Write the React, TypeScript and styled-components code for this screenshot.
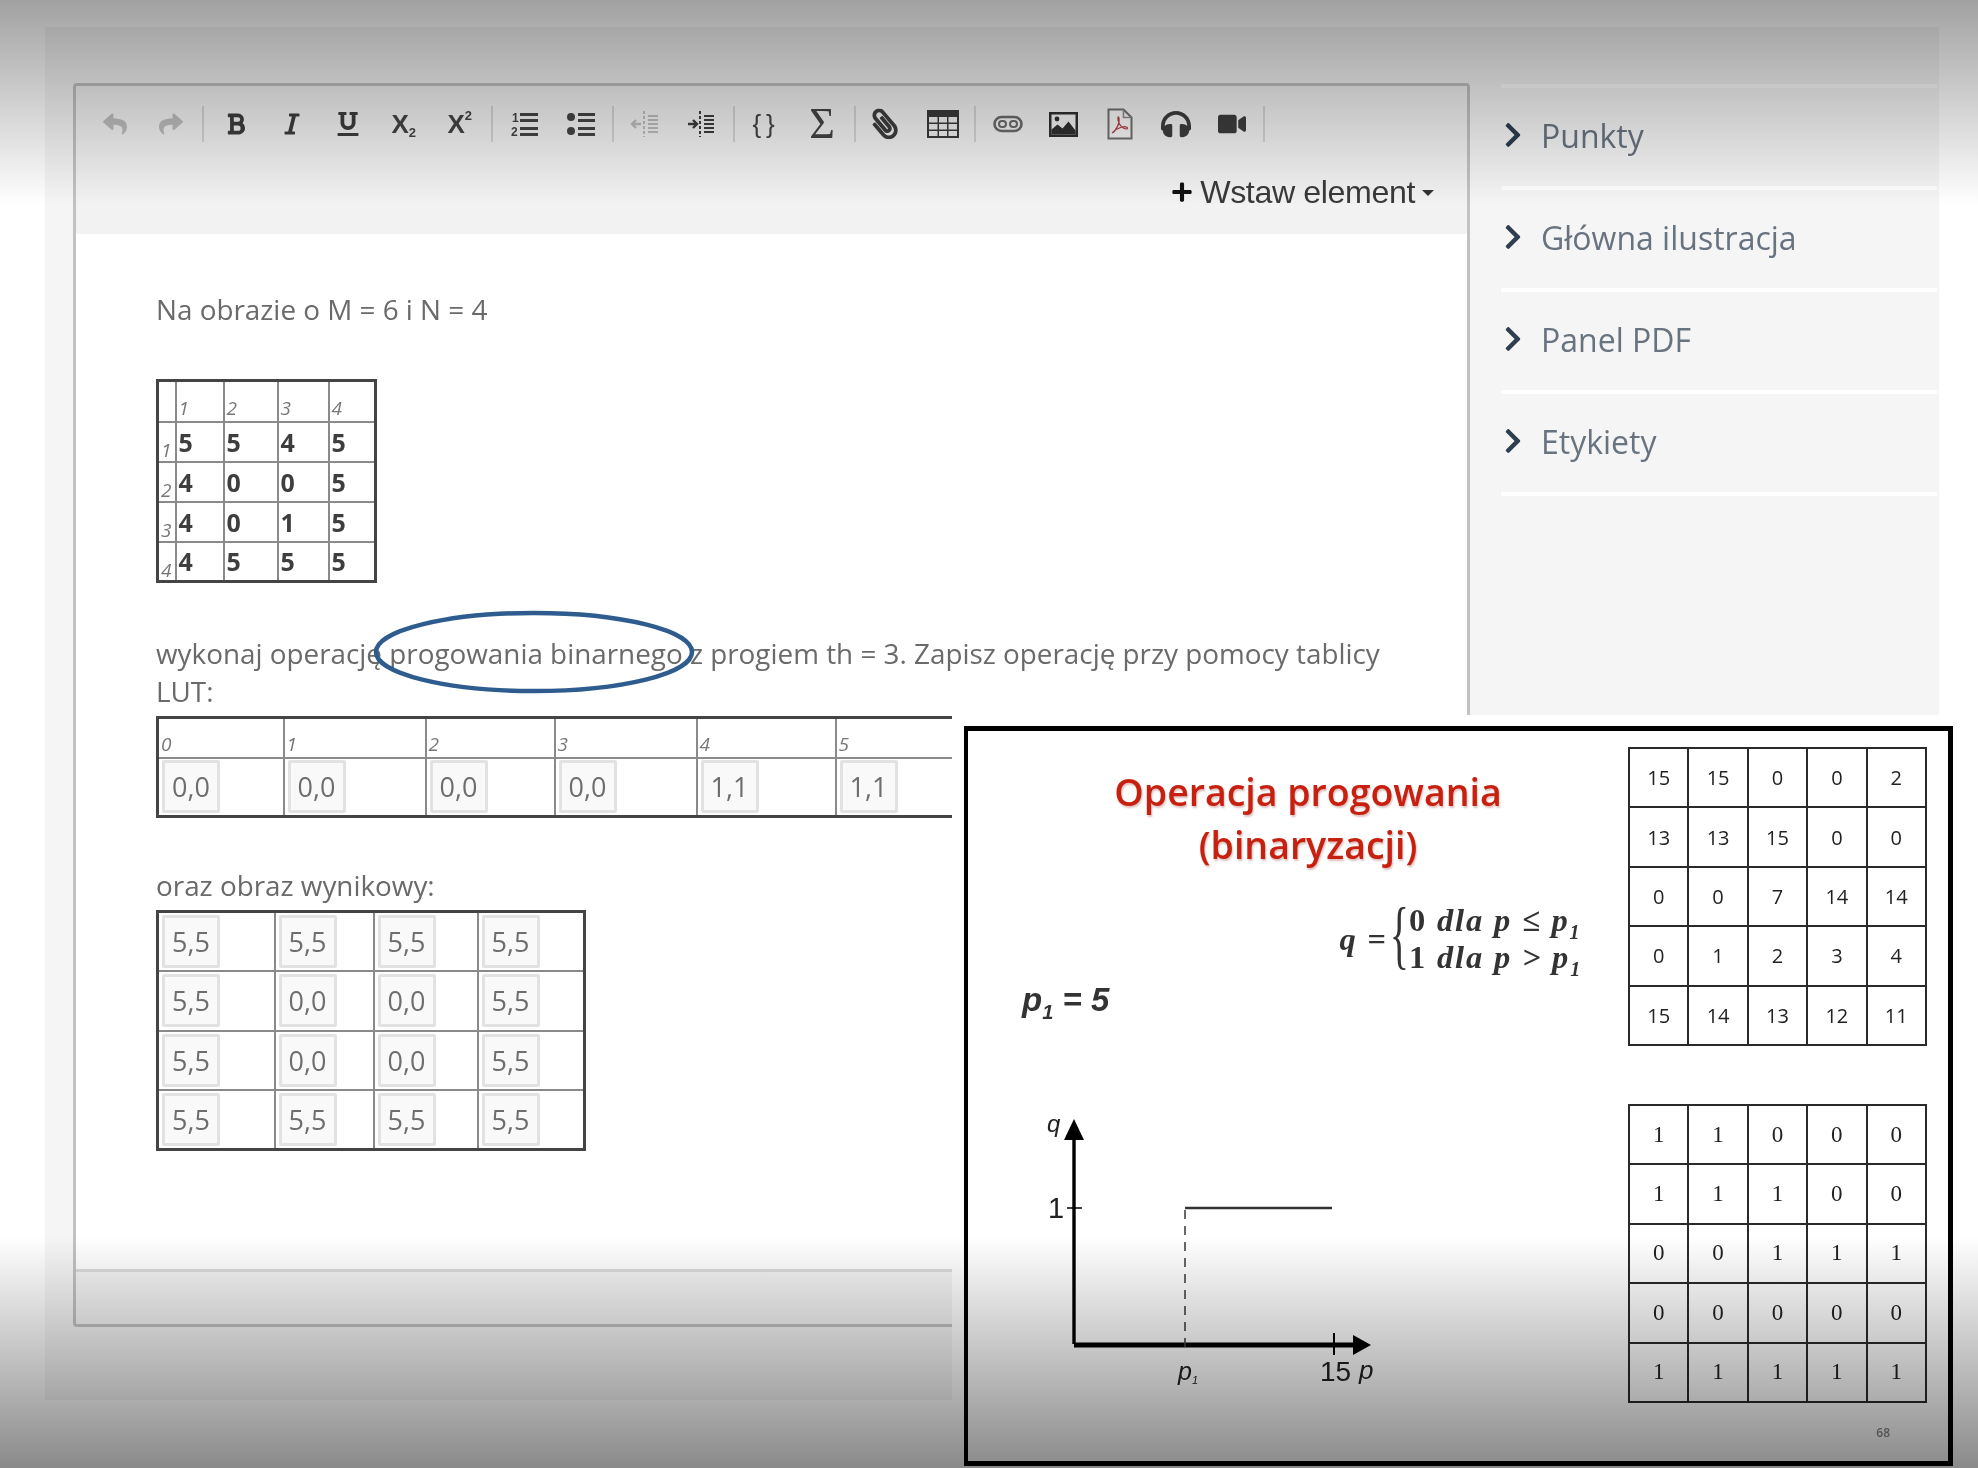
import React from "react";
import styled, { createGlobalStyle } from "styled-components";
import {
  FaReply, FaShare, FaBold, FaItalic, FaUnderline, FaPaperclip, FaHeadphones, FaVideo, FaPlus, FaChevronRight,
} from "react-icons/fa";

const Global = createGlobalStyle`
  html, body { margin: 0; padding: 0; background: #fff; }
  body { font-family: "Open Sans", "Noto Sans", sans-serif; }
`;

const Page = styled.div`
  position: relative; width: 1978px; height: 1468px; overflow: hidden; background: #fff;
  filter: blur(0.45px);
`;
const Panel = styled.div`
  display: flex; box-sizing: border-box; height: 1373px; margin: 0 39px 0 45px;
  position: relative; top: 27px; background: #f5f5f5; padding: 56px 0 0 28px;
`;
const Editor = styled.div`
  display: flex; flex-direction: column; box-sizing: border-box; flex: none; width: 1397px; height: 1244px;
  background: #fff; border: 3px solid #c2c2c2; border-radius: 4px;
`;
const Toolbar = styled.div`
  flex: none; box-sizing: border-box; height: 148px; background: #f2f2f2; padding: 18px 0 0 11px;
`;
const ToolRow = styled.div` display: flex; align-items: center; height: 40px; `;
const ToolBtn = styled.span<{ $muted?: boolean; $size?: number }>`
  display: flex; align-items: center; justify-content: center; flex: none; width: 56px; height: 40px;
  color: ${(p) => (p.$muted ? "#bdbdbd" : "#3d3d3d")};
  font-size: ${(p) => p.$size ?? 24}px;
`;
const MirrorBtn = styled(ToolBtn)` svg { transform: translateX(-2px) scaleX(-1) rotate(-4deg); } `;
const BraceGlyph = styled.span`
  font-family: "Liberation Sans", sans-serif; font-size: 26px; letter-spacing: 5px; color: #444; line-height: 1;
`;
const SumGlyph = styled.span`
  font-family: "Liberation Serif", serif; font-size: 44px; color: #444; line-height: 1;
`;
const ScriptGlyph = styled.span`
  font-family: "Liberation Sans", sans-serif; font-weight: 700; font-size: 26px; color: #444; line-height: 32px;
  display: flex; height: 32px;
`;
const ScriptMark = styled.span<{ $up?: boolean }>`
  font-size: 13px; line-height: 15px; align-self: ${(p) => (p.$up ? "flex-start" : "flex-end")};
`;
const ToolSep = styled.span`
  flex: none; width: 2px; height: 36px; margin: 0 3.4px; background: #d4d4d4;
`;
const InsertRow = styled.div`
  display: flex; align-items: center; justify-content: flex-end; gap: 7px; height: 44px;
  margin-top: 26px; padding-right: 33px;
  font-family: "Liberation Sans", Arial, sans-serif; font-size: 32.2px; letter-spacing: -0.4px; color: #3a3a3a;
  svg { color: #111; font-size: 22px; }
`;
const Caret = styled.span`
  width: 0; height: 0; border-left: 6px solid transparent; border-right: 6px solid transparent;
  border-top: 6px solid #333; margin-top: 2px;
`;
const Content = styled.div`
  flex: 1; box-sizing: border-box; padding: 56px 60px 0 80px; color: #6a6a6a; font-size: 27.85px; line-height: 38px;
`;
const Para = styled.p<{ $top: number }>` position: relative; margin: ${(p) => p.$top}px 0 0; `;
const Ring = styled.svg`
  position: absolute; left: 217px; top: -24px; width: 322px; height: 84px; overflow: visible;
`;
const Grid = styled.table<{ $w: number; $top: number }>`
  border-collapse: collapse; table-layout: fixed; width: ${(p) => p.$w}px; margin-top: ${(p) => p.$top}px;
  border: 3px solid #444;
`;
const Col = styled.col<{ $w: number }>` width: ${(p) => p.$w}px; `;
const Cell = styled.td<{ $h: number }>`
  box-sizing: border-box; height: ${(p) => p.$h}px; border: 2px solid #8a8a8a; padding: 0 0 0 2px;
  vertical-align: middle; line-height: 1;
`;
const Digit = styled.span`
  font-size: 25px; font-weight: 700; color: #3e3e3e;
`;
const Small = styled.i`
  display: block; font-size: 19px; line-height: 1; color: #777; transform: translateY(7px);
`;
const RowHead = styled.i`
  display: block; font-size: 19px; line-height: 1; color: #777; transform: translateY(9px);
`;
const Box = styled.span<{ $shift?: number }>`
  display: flex; align-items: center; justify-content: center; box-sizing: border-box; width: 58px; height: 53px;
  margin-left: ${(p) => p.$shift ?? 0}px; background: #f9f9f9; border: 3px solid #e2e2e2; border-radius: 2px;
  font-size: 27px; color: #6e6e6e;
`;
const Footer = styled.div`
  flex: none; height: 52px; background: #f4f4f4; border-top: 3px solid #dcdcdc;
`;
const Side = styled.div` flex: none; width: 436px; margin-left: 31px; margin-top: 1px; `;
const SideRow = styled.div`
  display: flex; align-items: center; gap: 14px; box-sizing: border-box; height: 102px;
  border-top: 4px solid #fff; padding: 0 0 4px 0; color: #687380; font-size: 32px;
  svg { color: #2c3e50; font-size: 28px; flex: none; margin-left: -2px; }
`;
const SideEnd = styled.div` border-top: 4px solid #fff; `;
const SlideMask = styled.div`
  position: absolute; left: 952px; top: 715px; right: 0; bottom: 0; box-sizing: border-box;
  background: #fff; padding: 11px 25px 2px 12px;
`;
const Slide = styled.div`
  position: relative; display: flex; box-sizing: border-box; height: 100%; background: #fff;
  border: 5px solid #000; border-left-width: 4px; padding: 16px 20px 0 0;
`;
const SlideLeft = styled.div` flex: none; width: 660px; display: flex; flex-direction: column; `;
const SlideTitle = styled.h1`
  margin: 18px 0 0 20px; text-align: center; font-size: 37.5px; line-height: 53px; font-weight: 600; color: #c8200f;
  text-shadow: 1px 2px 2px rgba(120, 0, 0, 0.25);
`;
const Formula = styled.div`
  display: flex; align-items: center; justify-content: flex-end; margin: 31px 46px 0 0;
  font-family: "Liberation Serif", serif; font-weight: 700; font-style: italic; font-size: 32.5px; letter-spacing: 1.8px; color: #333;
  sub { font-size: 20px; line-height: 0; }
`;
const Lhs = styled.span` margin-right: 2px; white-space: pre; `;
const Brace = styled.span`
  font-style: normal; font-weight: 400; font-size: 40px; line-height: 74px; letter-spacing: 0;
  transform: scale(1, 1.9) translateY(-2px);
`;
const FormulaLines = styled.div` display: flex; flex-direction: column; line-height: 37px; white-space: pre; `;
const Upright = styled.span` font-style: normal; font-weight: 700; `;
const Threshold = styled.div`
  margin: 6px 0 0 54px; font-family: "Liberation Sans", sans-serif; font-weight: 700; font-style: italic;
  font-size: 33px; line-height: 36px; color: #333;
  sub { font-size: 20px; line-height: 0; }
`;
const Chart = styled.svg` display: block; margin: 84px 0 0 61px; width: 360px; height: 296px; `;
const SlideRight = styled.div` flex: none; width: 299px; display: flex; flex-direction: column; gap: 58px; `;
const DataTable = styled.table<{ $serif?: boolean }>`
  border-collapse: collapse; table-layout: fixed; width: 299px; height: 299px;
  font-family: ${(p) => (p.$serif ? '"Liberation Serif", serif' : '"Open Sans", sans-serif')};
  font-size: ${(p) => (p.$serif ? 23 : 20)}px; color: #222;
  td { border: 2px solid #2a2a2a; text-align: center; padding: 0; }
`;
const PageNo = styled.span`
  position: absolute; right: 58px; bottom: 20px; font-size: 12px; font-weight: 600; color: #8a8a8a;
`;
const TopShade = styled.div`
  position: absolute; left: 0; right: 0; top: 0; height: 205px; pointer-events: none;
  background: linear-gradient(rgba(0,0,0,0.37), rgba(0,0,0,0));
`;
const BottomShade = styled.div`
  position: absolute; left: 0; right: 0; bottom: 0; height: 232px; pointer-events: none;
  background: linear-gradient(rgba(0,0,0,0), rgba(0,0,0,0.46));
`;

const OutdentIcon = ({ on }: { on?: boolean }) => (
  <svg width="30" height="30" viewBox="0 0 30 30" stroke="currentColor" fill="none" strokeWidth="2">
    <path d="M14 2v26" strokeDasharray="3 2" />
    <path d="M18 7h10M18 11h10M18 15h10M18 19h10M18 23h10" strokeWidth="2.2" />
    {on ? <path d="M2 15h8M7 11l4 4-4 4" strokeWidth="2.4" /> : <path d="M11 15H3M6 11l-4 4 4 4" strokeWidth="2.4" />}
  </svg>
);
const OrderedIcon = () => (
  <svg width="28" height="32" viewBox="0 -3 28 32" fill="#444">
    <text x="1" y="11" fontSize="12" fontWeight="700" fontFamily="Liberation Sans, sans-serif">1</text>
    <text x="0" y="25" fontSize="12" fontWeight="700" fontFamily="Liberation Sans, sans-serif">2</text>
    <path d="M9 2h18v3H9zM9 8h18v3H9zM9 16h18v3H9zM9 22h18v3H9z" />
  </svg>
);
const BulletIcon = () => (
  <svg width="28" height="26" viewBox="0 0 28 26" fill="#444">
    <circle cx="4" cy="6" r="4" />
    <circle cx="4" cy="20" r="4" />
    <path d="M11 2h17v3H11zM11 8h17v3H11zM11 16h17v3H11zM11 22h17v3H11z" />
  </svg>
);
const GridIcon = () => (
  <svg width="32" height="28" viewBox="0 0 32 28">
    <rect width="32" height="28" fill="#3a3a3a" />
    <path d="M2 7h8.5v5.5H2zM12 7h8v5.5h-8zM21.5 7H30v5.5h-8.5zM2 14h8.5v5.5H2zM12 14h8v5.5h-8zM21.5 14H30v5.5h-8.5zM2 21h8.5v5H2zM12 21h8v5h-8zM21.5 21H30v5h-8.5z" fill="#f0f0f0" />
  </svg>
);
const LinkIcon = () => (
  <svg width="30" height="18" viewBox="0 0 30 18" fill="none" stroke="#6a6a6a" strokeWidth="2.6">
    <rect x="1.5" y="2" width="27" height="14" rx="7" />
    <rect x="6" y="6" width="7" height="6" rx="3" strokeWidth="2" />
    <rect x="17" y="6" width="7" height="6" rx="3" strokeWidth="2" />
  </svg>
);
const ImageIcon = () => (
  <svg width="29" height="25" viewBox="0 0 29 25">
    <rect width="29" height="25" fill="#2f2f2f" />
    <rect x="2.5" y="2.5" width="24" height="20" fill="#f2f2f2" />
    <circle cx="8" cy="7" r="2.4" fill="#2f2f2f" />
    <path d="M2.5 22.5v-5l6-5 5 4 6-7 7 9v4z" fill="#2f2f2f" />
  </svg>
);
const PdfIcon = () => (
  <svg width="26" height="32" viewBox="0 0 26 32" fill="none">
    <path d="M1.5 1.5h15l8 8v21h-23z" stroke="#6f6f6f" strokeWidth="2" fill="#f7f7f7" />
    <path d="M16.5 1.5v8h8" stroke="#8b8b8b" strokeWidth="1.6" />
    <path d="M5 25c4-2 8-10 7-15-1-3-2 1 0 5 2 4 5 6 8 6 2-1-1-3-5-2-4 1-8 4-10 6z" stroke="#b3404a" strokeWidth="1.2" />
  </svg>
);

const headImg = ["1", "2", "3", "4"];
const source = [["5", "5", "4", "5"], ["4", "0", "0", "5"], ["4", "0", "1", "5"], ["4", "5", "5", "5"]];
const lut = [["0", "0,0"], ["1", "0,0"], ["2", "0,0"], ["3", "0,0"], ["4", "1,1"], ["5", "1,1"], ["6", "1,1"]];
const result = [["5,5", "5,5", "5,5", "5,5"], ["5,5", "0,0", "0,0", "5,5"], ["5,5", "0,0", "0,0", "5,5"], ["5,5", "5,5", "5,5", "5,5"]];
const gray = [[15, 15, 0, 0, 2], [13, 13, 15, 0, 0], [0, 0, 7, 14, 14], [0, 1, 2, 3, 4], [15, 14, 13, 12, 11]];
const binary = [[1, 1, 0, 0, 0], [1, 1, 1, 0, 0], [0, 0, 1, 1, 1], [0, 0, 0, 0, 0], [1, 1, 1, 1, 1]];

const DataGrid = ({ rows, serif }: { rows: number[][]; serif?: boolean }) => (
  <DataTable $serif={serif}>
    <tbody>
      {rows.map((r, i) => (
        <tr key={i}>{r.map((v, j) => <td key={j}>{v}</td>)}</tr>
      ))}
    </tbody>
  </DataTable>
);

export default function App() {
  return (
    <Page>
      <Global />
      <Panel>
        <Editor>
          <Toolbar>
            <ToolRow>
              <ToolBtn $muted><FaReply /></ToolBtn>
              <ToolBtn $muted><FaShare /></ToolBtn>
              <ToolSep />
              <ToolBtn $size={24}><FaBold /></ToolBtn>
              <ToolBtn $size={24}><FaItalic /></ToolBtn>
              <ToolBtn $size={24}><FaUnderline /></ToolBtn>
              <ToolBtn><ScriptGlyph>X<ScriptMark>2</ScriptMark></ScriptGlyph></ToolBtn>
              <ToolBtn><ScriptGlyph>X<ScriptMark $up>2</ScriptMark></ScriptGlyph></ToolBtn>
              <ToolSep />
              <ToolBtn><OrderedIcon /></ToolBtn>
              <ToolBtn><BulletIcon /></ToolBtn>
              <ToolSep />
              <ToolBtn $muted><OutdentIcon /></ToolBtn>
              <ToolBtn><OutdentIcon on /></ToolBtn>
              <ToolSep />
              <ToolBtn><BraceGlyph>{"{}"}</BraceGlyph></ToolBtn>
              <ToolBtn><SumGlyph>Σ</SumGlyph></ToolBtn>
              <ToolSep />
              <MirrorBtn $size={30}><FaPaperclip /></MirrorBtn>
              <ToolBtn><GridIcon /></ToolBtn>
              <ToolSep />
              <ToolBtn><LinkIcon /></ToolBtn>
              <ToolBtn><ImageIcon /></ToolBtn>
              <ToolBtn><PdfIcon /></ToolBtn>
              <ToolBtn $size={30}><FaHeadphones /></ToolBtn>
              <ToolBtn $size={28}><FaVideo /></ToolBtn>
              <ToolSep />
            </ToolRow>
            <InsertRow><FaPlus /><span>Wstaw element</span><Caret /></InsertRow>
          </Toolbar>
          <Content>
            <Para $top={0}>Na obrazie o M = 6 i N = 4</Para>
            <Grid $w={218} $top={51}>
              <colgroup><Col $w={18} /><Col $w={48} /><Col $w={54} /><Col $w={51} /><Col $w={47} /></colgroup>
              <tbody>
                <tr>
                  <Cell $h={41} />
                  {headImg.map((h) => <Cell key={h} $h={41}><Small>{h}</Small></Cell>)}
                </tr>
                {source.map((r, i) => (
                  <tr key={i}>
                    <Cell $h={40}><RowHead>{i + 1}</RowHead></Cell>
                    {r.map((v, j) => <Cell key={j} $h={40}><Digit>{v}</Digit></Cell>)}
                  </tr>
                ))}
              </tbody>
            </Grid>
            <Para $top={51}>
              wykonaj operację progowania binarnego z progiem th = 3. Zapisz operację przy pomocy tablicy LUT:
              <Ring viewBox="0 0 322 84">
                <ellipse cx="161" cy="42" rx="158" ry="39" fill="none" stroke="#2f5c8f" strokeWidth="4.5" />
              </Ring>
            </Para>
            <Grid $w={958} $top={6}>
              <colgroup>{[126, 142, 129, 142, 139, 140, 140].map((w, i) => <Col key={i} $w={w} />)}</colgroup>
              <tbody>
                <tr>{lut.map(([h]) => <Cell key={h} $h={40}><Small>{h}</Small></Cell>)}</tr>
                <tr>{lut.map(([h, v]) => <Cell key={h} $h={59}><Box $shift={1}>{v}</Box></Cell>)}</tr>
              </tbody>
            </Grid>
            <Para $top={48}>oraz obraz wynikowy:</Para>
            <Grid $w={427} $top={6}>
              <colgroup><Col $w={117} /><Col $w={99} /><Col $w={104} /><Col $w={107} /></colgroup>
              <tbody>
                {result.map((r, i) => (
                  <tr key={i}>
                    {r.map((v, j) => <Cell key={j} $h={59.6}><Box $shift={1}>{v}</Box></Cell>)}
                  </tr>
                ))}
              </tbody>
            </Grid>
          </Content>
          <Footer />
        </Editor>
        <Side>
          {["Punkty", "Główna ilustracja", "Panel PDF", "Etykiety"].map((t) => (
            <SideRow key={t}><FaChevronRight /><span>{t}</span></SideRow>
          ))}
          <SideEnd />
        </Side>
      </Panel>
      <SlideMask>
        <Slide>
          <SlideLeft>
            <SlideTitle>Operacja progowania<br />(binaryzacji)</SlideTitle>
            <Formula>
              <Lhs>q <Upright>=</Upright></Lhs>
              <Brace>{"{"}</Brace>
              <FormulaLines>
                <span><Upright>0</Upright> dla p ≤ p<sub>1</sub></span>
                <span><Upright>1</Upright> dla p &gt; p<sub>1</sub></span>
              </FormulaLines>
            </Formula>
            <Threshold>p<sub>1</sub> = 5</Threshold>
            <Chart viewBox="0 0 360 296">
              <g stroke="#000" fill="none">
                <path d="M45 30V242" strokeWidth="3.4" />
                <path d="M45 243H328" strokeWidth="5" />
                <path d="M38 106H53" strokeWidth="1.5" />
                <path d="M156 106H303" strokeWidth="2.6" stroke="#333" />
                <path d="M156 108V252" strokeWidth="1.6" strokeDasharray="9 7" stroke="#444" />
                <path d="M305 231V253" strokeWidth="2" />
              </g>
              <path d="M45 17l10 21H35z" fill="#000" />
              <path d="M342 243l-18-10v20z" fill="#000" />
              <g fontFamily="Liberation Sans, sans-serif" fill="#222">
                <text x="18" y="30" fontSize="24" fontStyle="italic">q</text>
                <text x="19" y="116" fontSize="29">1</text>
                <text x="149" y="278" fontSize="25" fontStyle="italic">p<tspan fontSize="11" dy="4">1</tspan></text>
                <text x="291" y="279" fontSize="28">15</text>
                <text x="330" y="277" fontSize="26" fontStyle="italic">p</text>
              </g>
            </Chart>
          </SlideLeft>
          <SlideRight>
            <DataGrid rows={gray} />
            <DataGrid rows={binary} serif />
          </SlideRight>
          <PageNo>68</PageNo>
        </Slide>
      </SlideMask>
      <TopShade />
      <BottomShade />
    </Page>
  );
}
